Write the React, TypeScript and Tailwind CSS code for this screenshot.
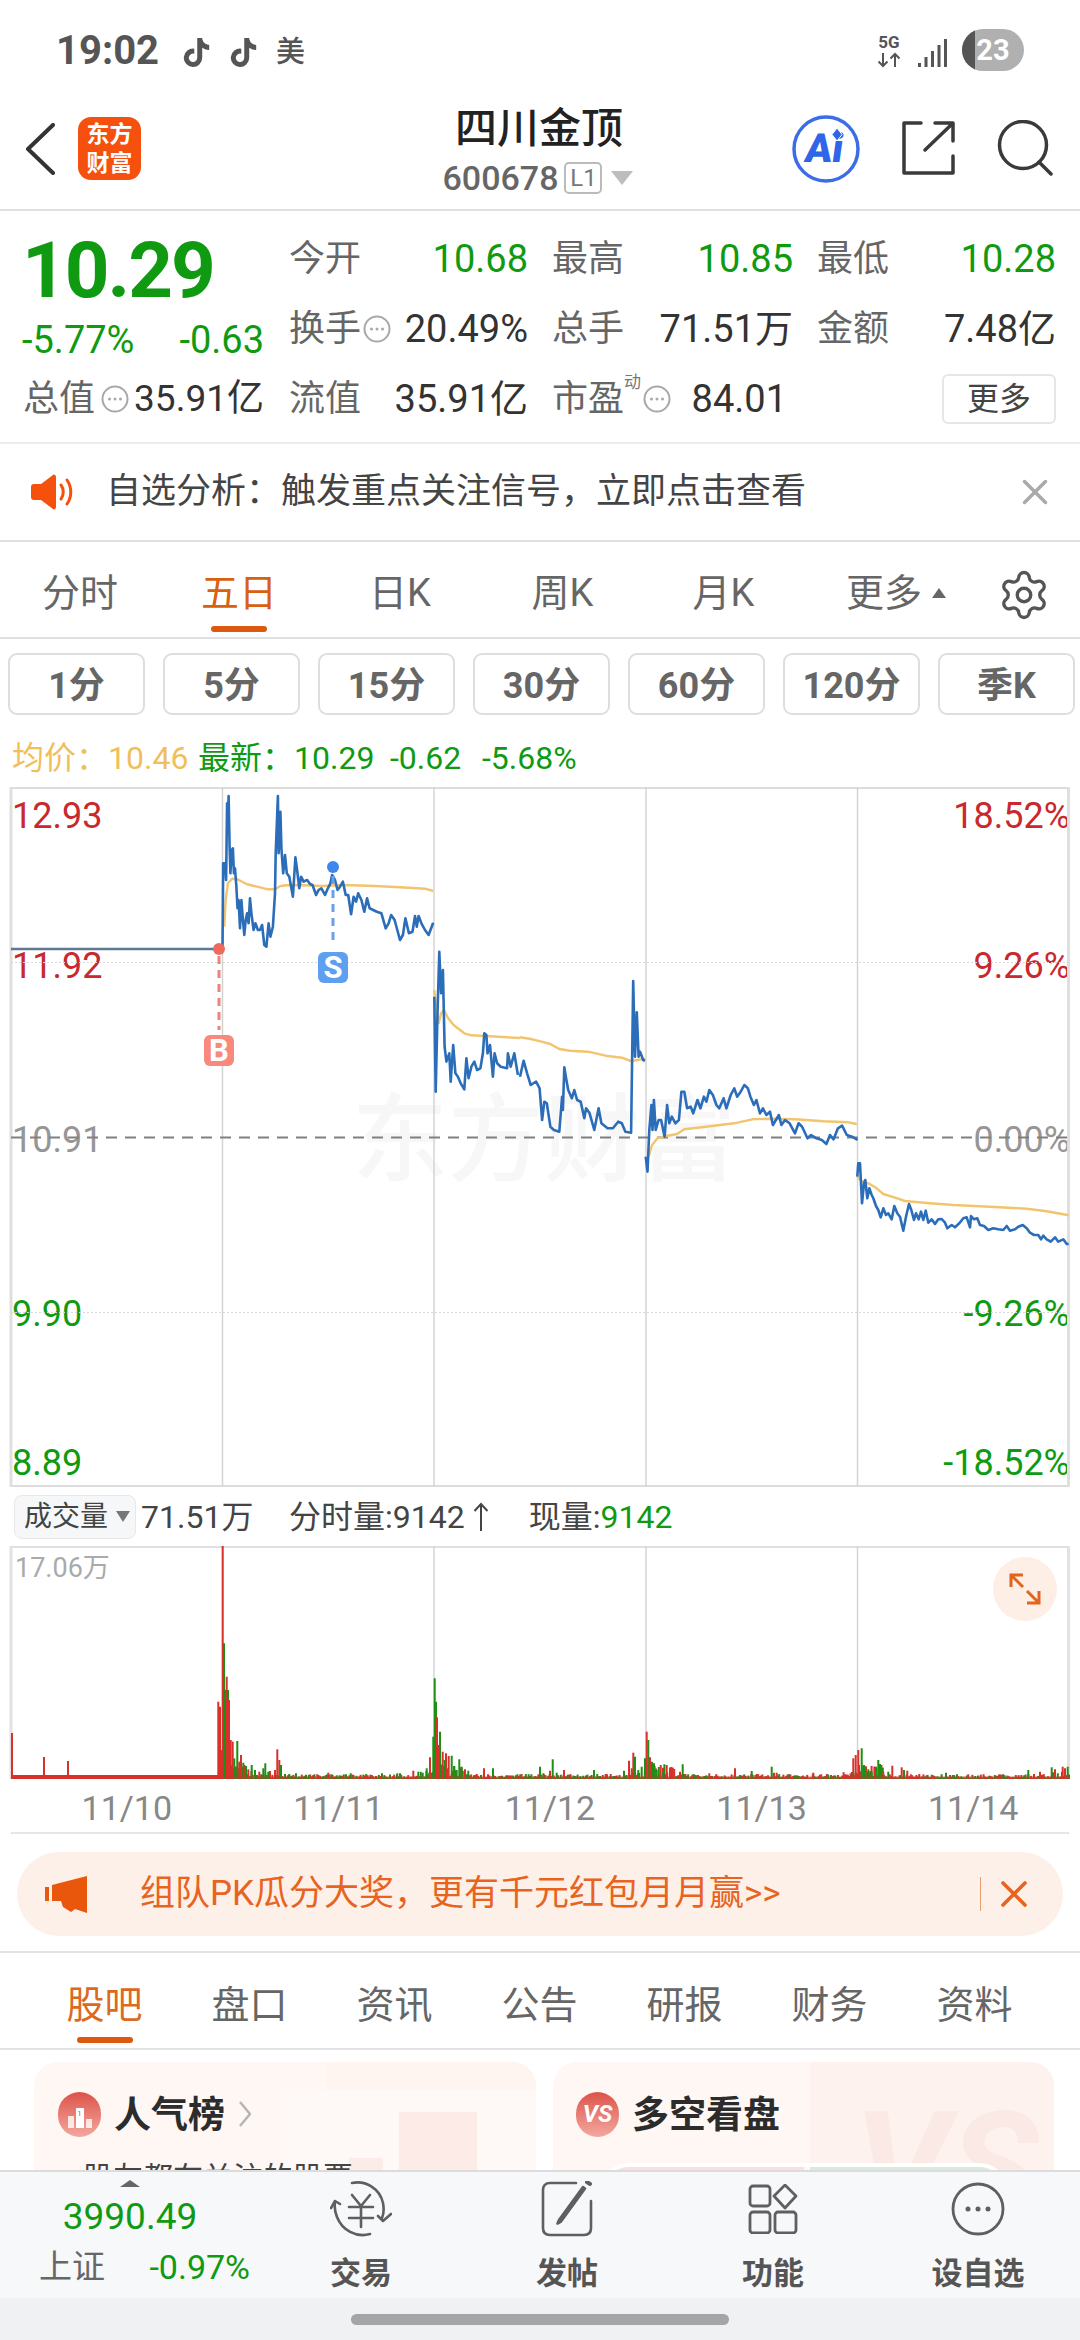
import { Settings, X } from "lucide-react";
import { FaTiktok } from "react-icons/fa";

const GREEN = "text-[#0f9a12]";

// chart traces, read off as pairs of x, y
const toPoints = (pts: number[], ox: number, oy: number, sx: number, sy: number) => {
  const out: string[] = [];
  for (let i = 0; i < pts.length; i += 2) {
    out.push(`${(ox + pts[i] / sx).toFixed(1)},${(oy + pts[i + 1] / sy).toFixed(1)}`);
  }
  return out.join(" ");
};

const day2 = toPoints([623,508,625,250,630,250,633,300,636,70,638,130,640,48,643,200,645,280,649,210,652,205,655,280,658,265,662,320,665,385,668,360,672,445,676,360,680,420,684,465,688,420,692,400,696,430,700,355,704,400,710,450,715,430,722,450,728,450,734,435,740,495,746,500,752,430,757,470,764,440,770,340,772,220,778,48,780,220,785,95,788,205,793,280,798,225,803,280,810,290,820,350,827,232,832,270,838,325,843,290,850,305,860,300,868,312,875,315,885,345,892,330,900,325,910,345,918,325,925,310,930,285,938,300,945,330,952,320,960,305,968,345,975,345,983,403,990,350,997,365,1003,340,1012,360,1020,395,1028,355,1035,385,1045,390,1055,395,1068,400,1080,445,1088,430,1095,405,1105,420,1120,480,1128,465,1135,415,1145,460,1155,455,1162,408,1167,440,1172,408,1180,430,1190,450,1200,465,1213,428], 0, 780, 2.8, 3);
const day3a = toPoints([1216,650,1220,935,1225,700,1230,515,1235,640,1240,570,1245,800,1250,845,1258,820,1262,905,1269,795,1275,880,1282,890,1290,910,1300,928,1306,835,1312,895,1320,860,1328,845,1336,870,1345,865,1352,820,1356,760,1362,765,1365,820,1372,795,1380,890,1385,820,1392,850,1402,860,1420,865,1422,820,1430,860,1440,820,1450,885], 0, 780, 2.8, 3);
const day3b = toPoints([0,890,10,842,20,880,30,915,45,905,55,925,62,1020,68,965,75,970,85,1040,95,1050,110,1055,118,950,120,990,124,862,130,900,135,930,145,955,152,930,160,960,170,965,180,1015,185,985,195,1000,208,1050,220,985,228,1030,245,1045,260,1045,275,1025,285,1030,295,1055,311,1058,317,603,322,830,327,697,332,830,336,815,345,840,350,842], 520, 780, 2.8, 3);
const day4 = toPoints([352,1130,357,1175,362,1050,368,975,371,1050,375,960,380,1050,388,1020,395,1020,405,1070,412,975,418,1030,425,1010,435,1030,445,1020,452,935,460,935,468,985,478,980,485,1000,497,960,505,985,515,950,522,965,530,930,540,945,550,975,558,985,570,955,578,985,590,945,600,925,608,950,618,935,628,915,638,925,645,950,655,975,662,960,672,1000,680,985,690,1005,700,995,708,1035,725,1005,732,1035,742,1020,755,1030,770,1060,780,1030,790,1040,805,1075,815,1065,830,1075,845,1080,858,1092,868,1065,878,1078,890,1045,902,1037,915,1065,930,1070,945,1080], 520, 780, 2.8, 3);
const day5 = toPoints([52,170,55,130,60,130,66,250,72,190,76,180,82,235,88,205,95,225,100,235,108,258,115,270,122,292,130,265,138,285,145,280,155,298,163,258,172,280,180,290,190,332,198,290,207,252,214,270,222,300,228,280,236,298,243,275,250,300,257,272,265,308,275,298,285,312,295,298,305,297,315,308,322,325,335,315,345,322,358,310,370,295,380,292,390,322,393,288,402,298,412,295,420,315,432,318,445,330,460,325,475,328,490,330,500,318,510,332,525,328,535,320,548,315,560,325,570,338,582,345,595,345,603,358,610,347,620,358,632,365,645,352,655,365,670,358,680,372,686,372], 840, 1120, 3, 3);

const avg2 = toPoints([628,440,632,360,638,310,650,296,665,298,690,312,720,320,750,328,770,328,785,318,810,315,850,316,900,318,960,315,1050,318,1120,322,1190,326,1213,333], 0, 780, 2.8, 3);
const avg3a = toPoints([1216,630,1218,650,1228,730,1235,700,1243,690,1255,715,1270,735,1300,760,1320,766,1360,768,1420,772,1456,774], 0, 780, 2.8, 3);
const avg3b = toPoints([0,772,30,777,60,785,85,792,110,807,140,812,190,815,240,827,285,833,310,843,350,836], 520, 780, 2.8, 3);
const avg4 = toPoints([360,1130,370,1095,385,1075,410,1068,440,1062,460,1048,520,1040,600,1030,650,1018,700,1016,770,1018,850,1024,920,1027,943,1032], 520, 780, 2.8, 3);
const avg5 = toPoints([52,170,65,183,85,190,110,205,130,222,165,233,195,243,260,249,340,255,450,260,560,266,620,274,686,286], 840, 1120, 3, 3);

const RED_BAR = "#d9302c";
const GREEN_BAR = "#1c8f14";

// x, top (crop coordinates), 0 red / 1 green
const peaksA = [55,185,0,60,200,0,64,330,0,68,-282,0,72,10,1,75,150,1,80,110,0,84,150,1,87,180,0,92,300,0,98,305,0,103,355,1,112,303,1,118,365,0,123,345,0,130,368,1,138,378,1,145,388,0,155,375,1,165,390,1,178,395,0,190,385,1,196,370,1,205,395,1,210,393,0,225,390,0,232,328,0,238,360,0,243,375,1,255,402,1,268,402,1,288,400,1,355,405,0,385,398,0,395,403,1,438,403,1,452,400,1,500,407,0,546,400,1,592,400,1,600,400,1,640,392,0,655,395,1,668,398,1,680,385,1,690,352,0,700,290,1,704,115,1,708,185,1,711,232,0,716,315,0,720,275,1,728,335,0,734,360,1,738,340,0,746,348,0,755,347,1,762,378,1,770,390,1,778,358,1,785,380,1,795,388,0,805,392,1,852,385,0,879,385,1,1020,380,1,1030,400,1,1058,358,1,1050,392,0,1070,398,1,1092,390,0,1182,390,1,1232,402,0,1272,392,1,1287,362,0,1295,385,0,1300,338,0,1305,350,1,1315,390,1,1325,380,1,1335,355,1,1340,275,0,1345,300,1,1349,355,0];
const peaksB = [30,352,0,36,365,1,42,370,1,50,390,1,62,375,0,70,395,1,80,375,0,120,395,0,128,373,1,208,400,0,285,385,0,335,393,1,395,380,1,402,398,0,410,398,0,520,398,0,640,355,0,647,345,0,655,330,0,665,325,1,672,375,1,685,388,1,695,395,1,708,380,1,715,360,1,720,375,1,730,395,0,745,395,1,757,377,0,785,382,0,792,390,1,802,392,0,838,402,0,918,398,1,1165,390,1,1200,395,0,1235,382,1,1245,388,0,1268,380,0,1275,385,0,1283,380,1];

type Bar = { x: number; top: number; c: string };
const bars: Bar[] = [];
let seed = 7;
for (let x = 222; x < 1069; x += 1.4) {
  seed = (seed * 16807) % 2147483647;
  const r = (seed % 1000) / 1000;
  seed = (seed * 16807) % 2147483647;
  const day = ((x - 222) % 211.6) / 211.6;
  const lift = day < 0.14 ? 14 : day > 0.92 ? 7 : 4;
  bars.push({ x, top: 1778 - r * lift, c: seed % 2 ? RED_BAR : GREEN_BAR });
}
for (let i = 0; i < peaksA.length; i += 3) {
  bars.push({ x: 200 + peaksA[i] / 3, top: 1640 + peaksA[i + 1] / 3, c: peaksA[i + 2] ? GREEN_BAR : RED_BAR });
}
for (let i = 0; i < peaksB.length; i += 3) {
  bars.push({ x: 640 + peaksB[i] / 3, top: 1640 + peaksB[i + 1] / 3, c: peaksB[i + 2] ? GREEN_BAR : RED_BAR });
}

const DotsIcon = () => (
  <svg width="28" height="28" viewBox="0 0 28 28" className="shrink-0">
    <circle cx="14" cy="14" r="12.5" fill="none" stroke="#a8a8a8" strokeWidth="2" />
    <circle cx="8.5" cy="14" r="1.5" fill="#a8a8a8" />
    <circle cx="14" cy="14" r="1.5" fill="#a8a8a8" />
    <circle cx="19.5" cy="14" r="1.5" fill="#a8a8a8" />
  </svg>
);

const StatusBar = () => (
  <div className="h-[91px] pl-[56px] pr-[56px] flex items-start pt-[29px] text-[#555]">
    <span className="text-[40px] leading-[44px] font-bold w-[126px]">19:02</span>
    <FaTiktok size={29} className="mt-[9px] text-[#555]" />
    <FaTiktok size={29} className="mt-[9px] ml-[18px] text-[#555]" />
    <span className="text-[29px] leading-[42px] mt-[2px] ml-[18px] font-medium">美</span>
    <div className="ml-auto flex items-start">
      <div className="flex flex-col items-center w-[26px] mt-[5px]">
        <span className="text-[17px] leading-[17px] font-bold">5G</span>
        <svg width="26" height="16" viewBox="0 0 26 16" fill="none" stroke="#555" strokeWidth="2" className="mt-[1px]">
          <path d="M7 1v13M2.5 9.5 7 14l4.5-4.5M19 15V2M14.5 6.500 19 2l4.500 4.500" />
        </svg>
      </div>
      <svg width="30" height="28" viewBox="0 0 30 28" fill="#555" className="ml-[16px] mt-[10px]">
        <rect x="0" y="24" width="3" height="4" />
        <rect x="6.500" y="18" width="3" height="10" />
        <rect x="13" y="12" width="3" height="16" />
        <rect x="19.500" y="6" width="3" height="22" />
        <rect x="26" y="0" width="3" height="28" />
      </svg>
      <div className="ml-[14px] w-[62px] h-[42px] rounded-full bg-[#b0b0b0] overflow-hidden flex items-center relative">
        <div className="w-[13px] h-full bg-[#555]" />
        <span className="absolute inset-0 text-center text-white font-bold text-[29px] leading-[42px]">23</span>
      </div>
    </div>
  </div>
);

const Header = () => (
  <div className="h-[120px] border-b-2 border-[#e0e0e0] flex items-start relative">
    <svg width="30" height="52" viewBox="0 0 30 52" fill="none" stroke="#333" strokeWidth="4" strokeLinecap="round" strokeLinejoin="round" className="ml-[25px] mt-[32px]">
      <path d="M28 2 3 26l25 24" />
    </svg>
    <div className="ml-[23px] mt-[26px] w-[63px] h-[63px] rounded-[13px] bg-[#f5500d] flex flex-col items-center justify-center text-white font-bold text-[23px] leading-[29px]">
      <span>东方</span>
      <span>财富</span>
    </div>
    <div className="absolute left-0 right-[2px] top-[12px] flex flex-col items-center">
      <span className="text-[42px] leading-[52px] font-medium text-[#222]">四川金顶</span>
      <div className="flex items-center mt-[3px] ml-[-2px]">
        <span className="text-[34px] leading-[40px] font-medium text-[#666]">600678</span>
        <span className="ml-[6px] w-[38px] h-[32px] border-2 border-[#bbb] rounded-[5px] text-[24px] leading-[28px] text-center text-[#777]">L1</span>
        <span className="ml-[9px] w-0 h-0 border-x-[11px] border-x-transparent border-t-[14px] border-t-[#bdbdbd]" />
      </div>
    </div>
    <div className="ml-auto flex items-start">
      <svg width="68" height="68" viewBox="0 0 68 68" className="mt-[24px]">
        <circle cx="34" cy="34" r="32" fill="none" stroke="#3a6ee8" strokeWidth="3.500" />
        <text x="12" y="47" fontSize="40" fontWeight="900" fill="#2f66e8" fontFamily="Roboto" transform="skewX(-8) translate(6 0)">Ai</text>
        <path d="M45 13l5 6.500-5 6.500-5-6.500z" fill="#2f66e8" stroke="#fff" strokeWidth="1" />
      </svg>
      <svg width="54" height="54" viewBox="0 0 54 54" fill="none" stroke="#3a3a3a" strokeWidth="3.500" strokeLinecap="round" strokeLinejoin="round" className="ml-[41px] mt-[30px]">
        <path d="M20 2H3v50h49V35M24 29 51 3M34 2h18v18" />
      </svg>
      <svg width="56" height="56" viewBox="0 0 56 56" fill="none" stroke="#3a3a3a" strokeWidth="3.500" strokeLinecap="round" className="ml-[42px] mr-[27px] mt-[29px]">
        <circle cx="26" cy="25" r="23.500" />
        <path d="m42 42 12 12" />
      </svg>
    </div>
  </div>
);

const Cell = ({ label, value, icon, sup, green, pr }: { label: string; value: string; icon?: boolean; sup?: boolean; green?: boolean; pr?: boolean }) => (
  <div className="h-[70px] flex items-center">
    <span className="text-[36px] leading-[44px] text-[#666]">{label}</span>
    {sup && <span className="text-[17px] leading-[18px] text-[#777] self-start mt-[9px]">动</span>}
    {icon && <span className="ml-[2px]"><DotsIcon /></span>}
    <span className={`ml-auto text-[38px] leading-[44px] ${green ? GREEN : "text-[#333]"} ${pr ? "mr-[6px]" : ""}`}>{value}</span>
  </div>
);

const QuoteBlock = () => (
  <div className="h-[233px] border-b-2 border-[#ececec] pt-[13px] flex">
    <div className="w-[289px] shrink-0 flex flex-col">
      <div className={`h-[93px] pl-[22px] text-[78px] leading-[93px] font-bold tracking-[-2px] ${GREEN}`}>10.29</div>
      <div className={`h-[47px] pl-[22px] pr-[25px] flex justify-between text-[38px] leading-[47px] ${GREEN}`}>
        <span>-5.77%</span>
        <span>-0.63</span>
      </div>
      <div className="h-[70px] pl-[23px] pr-[25px] flex items-center justify-between">
        <span className="text-[36px] leading-[44px] text-[#666]">总值</span>
        <DotsIcon />
        <span className="text-[37px] leading-[44px] text-[#333]">35.91亿</span>
      </div>
    </div>
    <div className="grid grid-cols-[239px_241px_239px] gap-x-[24px] content-start">
      <Cell label="今开" value="10.68" green />
      <Cell label="最高" value="10.85" green />
      <Cell label="最低" value="10.28" green />
      <Cell label="换手" value="20.49%" icon />
      <Cell label="总手" value="71.51万" />
      <Cell label="金额" value="7.48亿" />
      <Cell label="流值" value="35.91亿" />
      <Cell label="市盈" value="84.01" icon sup pr />
      <div className="h-[70px] flex items-center justify-end">
        <div className="w-[114px] h-[50px] border-2 border-[#e6e6e6] rounded-[6px] text-center text-[32px] leading-[46px] text-[#444]">更多</div>
      </div>
    </div>
  </div>
);

const Notice = () => (
  <div className="h-[98px] border-b-2 border-[#e0e0e0] flex items-center pl-[31px] pr-[24px]">
    <svg width="43" height="36" viewBox="0 0 43 36" className="shrink-0">
      <path d="M3 10h7L22 1c1-1 3 0 3 2v30c0 2-2 3-3 2L10 26H3c-2 0-3-1-3-3V13c0-2 1-3 3-3z" fill="#f5510c" />
      <path d="M30 11c3 4 3 10 0 14M36 6c5 7 5 17 0 24" fill="none" stroke="#f5510c" strokeWidth="3" strokeLinecap="round" />
    </svg>
    <span className="ml-[32px] text-[35px] leading-[44px] text-[#444]">自选分析：触发重点关注信号，立即点击查看</span>
    <X size={42} strokeWidth={2} className="ml-auto text-[#aaa]" />
  </div>
);

const periods = [
  { t: "分时", w: "w-[160px]" },
  { t: "五日", w: "w-[158px]", on: true },
  { t: "日K", w: "w-[164px]" },
  { t: "周K", w: "w-[161px]" },
  { t: "月K", w: "w-[161px]" },
];

const PeriodTabs = () => (
  <div className="h-[97px] border-b-2 border-[#e0e0e0] flex items-start pt-[29px] text-[#666]">
    {periods.map((p) => (
      <div key={p.t} className={`${p.w} flex flex-col items-center`}>
        <span className={`text-[38px] leading-[44px] ${p.on ? "text-[#d9600f]" : ""}`}>{p.t}</span>
        {p.on && <span className="mt-[11px] w-[56px] h-[6px] rounded-full bg-[#dc5a10]" />}
      </div>
    ))}
    <span className="ml-[42px] text-[38px] leading-[44px]">更多</span>
    <span className="ml-[10px] mt-[17px] w-0 h-0 border-x-[7px] border-x-transparent border-b-[10px] border-b-[#666]" />
    <Settings size={54} strokeWidth={1.500} className="ml-[51px] mt-[-3px] text-[#555]" />
  </div>
);

const intervals = ["1分", "5分", "15分", "30分", "60分", "120分", "季K"];

const IntervalRow = () => (
  <div className="h-[89px] pt-[14px] pl-[8px] flex gap-[18px]">
    {intervals.map((t) => (
      <div key={t} className="w-[137px] h-[62px] border-2 border-[#dedede] rounded-[9px] text-center text-[36px] leading-[62px] font-bold text-[#666]">
        {t}
      </div>
    ))}
  </div>
);

const QuoteLine = () => (
  <div className="h-[59px] pl-[12px] flex items-center text-[32px] leading-[40px]">
    <span className="text-[#f0bf5c] w-[186px]">均价：10.46</span>
    <span className={`w-[192px] ${GREEN}`}>最新：10.29</span>
    <span className={`w-[92px] ${GREEN}`}>-0.62</span>
    <span className={GREEN}>-5.68%</span>
  </div>
);

const priceLabels = [
  { l: "12.93", r: "18.52%", c: "text-[#c9282d]", y: "top-[7px]" },
  { l: "11.92", r: "9.26%", c: "text-[#c9282d]", y: "top-[157px]" },
  { l: "10.91", r: "0.00%", c: "text-[#969696]", y: "top-[331px]" },
  { l: "9.90", r: "-9.26%", c: GREEN, y: "top-[505px]" },
  { l: "8.89", r: "-18.52%", c: GREEN, y: "top-[654px]" },
];

const dayLines = [222.5, 434, 646, 857.5];

const PriceChart = () => (
  <div className="h-[700px] relative border-t-2 border-b-2 border-[#dcdcdc] mx-[11px]">
    <div className="absolute left-[-11px] top-[-2px] w-[1080px] h-[700px] overflow-hidden">
      <div className="absolute left-[352px] top-[297px] text-[96px] leading-[112px] font-medium text-[#f7f7f7] whitespace-nowrap">东方财富</div>
      {priceLabels.map((p) => (
        <div key={p.l} className={`absolute left-[12px] right-[10px] ${p.y} flex justify-between text-[36px] leading-[44px] ${p.c}`}>
          <span>{p.l}</span>
          <span>{p.r}</span>
        </div>
      ))}
      <svg viewBox="0 787 1080 700" className="absolute inset-0 w-[1080px] h-[700px]">
        <path d="M11 787v700M1068.500 787v700" stroke="#dfdfdf" strokeWidth="3" />
        {dayLines.map((x) => (
          <path key={x} d={`M${x} 787v700`} stroke="#d4d4d4" strokeWidth="1.500" />
        ))}
        <path d="M11 962.500h1058M11 1312.500h1058" stroke="#d8d8d8" strokeWidth="1" strokeDasharray="2 2" />
        <path d="M11 1137.500h1058" stroke="#808080" strokeWidth="2" strokeDasharray="11 8" />
        <path d="M11 949h211" stroke="#5d7a94" strokeWidth="2.500" />
        <g fill="none" stroke="#f2c46d" strokeWidth="2.400" strokeLinejoin="round">
          <polyline points={avg2} />
          <polyline points={avg3a} />
          <polyline points={avg3b} />
          <polyline points={avg4} />
          <polyline points={avg5} />
        </g>
        <g fill="none" stroke="#2c6db9" strokeWidth="2.600" strokeLinejoin="round">
          <polyline points={day2} />
          <polyline points={day3a} />
          <polyline points={day3b} />
          <polyline points={day4} />
          <polyline points={day5} />
        </g>
        <circle cx="219" cy="949" r="6" fill="#ef6a5e" />
        <path d="M219 956v74" stroke="#ee8378" strokeWidth="3" strokeDasharray="8 6" />
        <rect x="204" y="1035" width="30" height="31" rx="6" fill="#f98a7b" />
        <text x="219" y="1061" textAnchor="middle" fontSize="31" fontWeight="700" fill="#fff" fontFamily="Roboto">B</text>
        <circle cx="333" cy="867" r="6" fill="#3f86ee" />
        <path d="M333 876v70" stroke="#6aa0ea" strokeWidth="3" strokeDasharray="8 6" />
        <rect x="318" y="952" width="30" height="31" rx="6" fill="#5f9ff0" />
        <text x="333" y="978" textAnchor="middle" fontSize="31" fontWeight="700" fill="#fff" fontFamily="Roboto">S</text>
      </svg>
    </div>
  </div>
);

const VolumeRow = () => (
  <div className="h-[59px] flex items-center pl-[14px] text-[32px] leading-[40px] text-[#444]">
    <div className="w-[122px] h-[44px] rounded-[8px] border border-[#e8e8e8] bg-[#f6f7f9] flex items-center pl-[9px]">
      <span className="text-[28px] leading-[40px] text-[#444]">成交量</span>
      <span className="ml-[8px] w-0 h-0 border-x-[7px] border-x-transparent border-t-[11px] border-t-[#777]" />
    </div>
    <span className="ml-[5px] w-[148px]">71.51万</span>
    <span>分时量:9142</span>
    <svg width="16" height="30" viewBox="0 0 16 30" fill="none" stroke="#444" strokeWidth="2" className="ml-[8px]">
      <path d="M8 29V2M1.500 9 8 2l6.500 7" />
    </svg>
    <span className="ml-[40px]">现量:</span>
    <span className={GREEN}>9142</span>
  </div>
);

const VolumeChart = () => (
  <div className="h-[233px] relative mx-[11px] border-t-2 border-[#e0e0e0]">
    <svg viewBox="0 1546 1080 233" className="absolute left-[-11px] top-[-2px] w-[1080px] h-[233px]">
      <path d="M11 1546v233M1068.500 1546v233" stroke="#e2e2e2" strokeWidth="3" />
      {dayLines.map((x) => (
        <path key={x} d={`M${x} 1546v233`} stroke="#d4d4d4" strokeWidth="1.500" />
      ))}
      <path d="M11 1777h211" stroke={RED_BAR} strokeWidth="4" />
      <path d="M12 1779v-46M44 1779v-22M68 1779v-18" stroke={RED_BAR} strokeWidth="2" />
      {bars.map((b, i) => (
        <path key={i} d={`M${b.x.toFixed(1)} 1779V${b.top.toFixed(1)}`} stroke={b.c} strokeWidth="2" />
      ))}
      <path d="M222 1777.500h847" stroke="#b5412a" strokeWidth="2" opacity="0.7" />
    </svg>
    <span className="absolute left-[4px] top-[5px] text-[27px] leading-[30px] text-[#aaa]">17.06万</span>
    <div className="absolute left-[982px] top-[9px] w-[64px] h-[64px] rounded-full bg-[#fdeee6] flex items-center justify-center">
      <svg width="32" height="32" viewBox="0 0 32 32" fill="none" stroke="#e0651f" strokeWidth="3">
        <path d="M2 14V2h12M2 2l12 12M30 18v12H18M30 30 18 18" />
      </svg>
    </div>
  </div>
);

const DateAxis = () => (
  <div className="h-[55px] border-b-2 border-[#e6e6e6] mx-[11px] pl-[10px] pt-[7px] grid grid-cols-[repeat(5,211.600px)] text-[34px] leading-[44px] text-[#888] text-center">
    <span>11/10</span>
    <span>11/11</span>
    <span>11/12</span>
    <span>11/13</span>
    <span>11/14</span>
  </div>
);

const PromoBar = () => (
  <div className="h-[119px] pt-[18px] px-[17px] border-b-2 border-[#e2e2e2]">
    <div className="h-[84px] rounded-full bg-[#fdf0e8] flex items-center pl-[28px] text-[#e8641e]">
      <svg width="42" height="37" viewBox="0 0 42 37" fill="#e8570c" className="shrink-0">
        <rect x="0" y="11" width="4" height="14" />
        <path d="M7 9 42 0v37l-12-4-4 3-8-5-2-6H7z" />
      </svg>
      <span className="ml-[53px] text-[35px] leading-[44px] w-[840px] whitespace-nowrap">组队PK瓜分大奖，更有千元红包月月赢&gt;&gt;</span>
      <span className="w-px h-[34px] bg-[#e8a070]" />
      <X size={44} strokeWidth={2} className="ml-[11px]" />
    </div>
  </div>
);

const pageTabs = ["股吧", "盘口", "资讯", "公告", "研报", "财务", "资料"];

const PageTabs = () => (
  <div className="h-[97px] border-b-2 border-[#e2e2e2] pl-[32px] pt-[30px] flex items-start">
    {pageTabs.map((t, i) => (
      <div key={t} className="w-[145px] flex flex-col items-center">
        <span className={`text-[38px] leading-[44px] ${i === 0 ? "text-[#dc6a1e]" : "text-[#666]"}`}>{t}</span>
        {i === 0 && <span className="mt-[10px] w-[56px] h-[6px] rounded-full bg-[#dc5a10]" />}
      </div>
    ))}
  </div>
);

const Cards = () => (
  <div className="h-[120px] pt-[12px] pl-[34px] flex gap-[17px] overflow-hidden">
    <div className="w-[502px] h-[240px] shrink-0 rounded-[24px] bg-[#fef7f4] relative overflow-hidden">
      <svg width="502" height="240" viewBox="0 0 502 240" className="absolute inset-0">
        <rect x="293" y="0" width="209" height="240" fill="#fdf1ed" opacity="0.600" />
        <rect x="245" y="28" width="262" height="212" fill="#fef8f6" />
        <rect x="365" y="50" width="78" height="190" fill="#fbe7e3" opacity="0.800" />
        <rect x="315" y="96" width="34" height="144" fill="#fbe7e3" opacity="0.700" />
      </svg>
      <div className="relative flex items-center pl-[24px] pt-[28px]">
        <span className="w-[43px] h-[45px] rounded-full bg-gradient-to-b from-[#dc5148] to-[#f1a7a0] flex items-end justify-center pb-[9px] gap-[2px]">
          <span className="w-[6px] h-[12px] bg-white/80" />
          <span className="w-[8px] h-[20px] bg-white text-[8px] leading-[12px] text-center text-[#d9534c]">1</span>
          <span className="w-[6px] h-[9px] bg-white/80" />
        </span>
        <span className="ml-[13px] mt-[4px] text-[37px] leading-[44px] font-bold text-[#2c2c2c]">人气榜</span>
        <svg width="12" height="26" viewBox="0 0 12 26" fill="none" stroke="#b5b5b5" strokeWidth="2.500" className="ml-[14px]">
          <path d="m1 1 10 12L1 25" />
        </svg>
      </div>
      <div className="relative mt-[22px] pl-[49px] text-[30px] leading-[36px] text-[#444]">股友都在关注的股票</div>
    </div>
    <div className="w-[501px] h-[240px] shrink-0 rounded-[24px] bg-[#fef7f4] relative overflow-hidden">
      <div className="absolute left-[257px] top-0 right-0 bottom-0 bg-[#fdf2ee]" />
      <span className="absolute left-[301px] top-[10px] text-[150px] leading-[190px] font-bold italic text-[#fbe9e5] [font-family:Roboto]">VS</span>
      <div className="relative flex items-center pl-[23px] pt-[28px]">
        <span className="w-[43px] h-[45px] rounded-full bg-gradient-to-b from-[#dc5148] to-[#f1a7a0] text-white font-bold italic text-center text-[24px] leading-[45px]">VS</span>
        <span className="ml-[13px] mt-[4px] text-[37px] leading-[44px] font-bold text-[#2c2c2c]">多空看盘</span>
      </div>
      <div className="absolute left-[46px] top-[101px] w-[410px] h-[60px] border-[4px] border-white rounded-t-[30px] overflow-hidden flex gap-[6px]">
        <div className="w-[201px] bg-[#fadfdc]" />
        <div className="flex-1 bg-[#d8ecdc]" />
      </div>
    </div>
  </div>
);

const TradeIcon = () => (
  <svg width="62" height="56" viewBox="0 0 62 56" fill="none" stroke="#5f5f5f" strokeWidth="2.600" strokeLinecap="round" strokeLinejoin="round">
    <path d="M22 2c14-3 28 6 31 20 1 5 1 10-1 15M40 53C26 57 12 49 7 36 5 31 4 27 5 21" />
    <path d="m1 27 4-7 5 3M61 33l-8 7-5-5" />
    <path d="M22 14l9 11 9-11M19 26h24M19 37h24M31 25v21" />
  </svg>
);

const PostIcon = () => (
  <svg width="52" height="56" viewBox="0 0 52 56" fill="none" stroke="#5f5f5f" strokeWidth="2.600" strokeLinecap="round" strokeLinejoin="round">
    <path d="M35 2H9C4 2 2 5 2 9v38c0 5 3 7 7 7h34c5 0 7-3 7-7V20" />
    <path d="m18 39 24-33 2 1.500-24 33-3.500 2z" fill="#5f5f5f" />
    <path d="m46 1 3 2" strokeWidth="4" />
  </svg>
);

const AppsIcon = () => (
  <svg width="50" height="50" viewBox="0 0 50 50" fill="none" stroke="#5f5f5f" strokeWidth="2.800" strokeLinejoin="round">
    <rect x="2" y="2" width="20" height="20" rx="3" />
    <path d="m37 1 11 11-11 12-11-12z" />
    <rect x="2" y="28" width="20" height="21" rx="3" />
    <rect x="27" y="28" width="21" height="21" rx="3" />
  </svg>
);

const MoreIcon = () => (
  <svg width="54" height="54" viewBox="0 0 54 54" fill="none" stroke="#5f5f5f" strokeWidth="2.800">
    <circle cx="27" cy="27" r="25" />
    <circle cx="17" cy="27" r="2.500" fill="#5f5f5f" stroke="none" />
    <circle cx="27" cy="27" r="2.500" fill="#5f5f5f" stroke="none" />
    <circle cx="37" cy="27" r="2.500" fill="#5f5f5f" stroke="none" />
  </svg>
);

const navItems = [
  { t: "交易", icon: <TradeIcon />, w: "w-[206px]" },
  { t: "发帖", icon: <PostIcon />, w: "w-[206px]" },
  { t: "功能", icon: <AppsIcon />, w: "w-[206px]" },
  { t: "设自选", icon: <MoreIcon />, w: "w-[204px]" },
];

const BottomBar = () => (
  <div className="h-[128px] border-t-2 border-[#dcdcdc] bg-[#f7f8fa] flex relative">
    <div className="w-[258px] shrink-0 flex flex-col pl-[39px] pt-[8px]">
      <div className="w-[182px] flex flex-col items-center">
        <span className="w-0 h-0 border-x-[10px] border-x-transparent border-b-[7px] border-b-[#666]" />
        <span className={`mt-[10px] text-[37px] leading-[40px] ${GREEN}`}>3990.49</span>
      </div>
      <div className="mt-[10px] w-[211px] flex justify-between items-center">
        <span className="text-[33px] leading-[40px] text-[#666]">上证</span>
        <span className={`text-[34px] leading-[40px] ${GREEN}`}>-0.97%</span>
      </div>
    </div>
    {navItems.map((n) => (
      <div key={n.t} className={`${n.w} flex flex-col items-center`}>
        <div className="h-[58px] mt-[8px] flex items-center justify-center">{n.icon}</div>
        <span className="mt-[18px] text-[31px] leading-[36px] font-semibold text-[#555]">{n.t}</span>
      </div>
    ))}
  </div>
);

export default function App() {
  return (
    <div className="w-[1080px] h-[2340px] overflow-hidden flex flex-col bg-white [font-family:Roboto,'Noto_Sans_CJK_SC',sans-serif]">
      <StatusBar />
      <Header />
      <QuoteBlock />
      <Notice />
      <PeriodTabs />
      <IntervalRow />
      <QuoteLine />
      <PriceChart />
      <VolumeRow />
      <VolumeChart />
      <DateAxis />
      <PromoBar />
      <PageTabs />
      <Cards />
      <BottomBar />
      <div className="h-[42px] bg-[#f0f1f3] flex justify-center pt-[16px]">
        <div className="w-[378px] h-[11px] rounded-full bg-[#a5a5a5]" />
      </div>
    </div>
  );
}
